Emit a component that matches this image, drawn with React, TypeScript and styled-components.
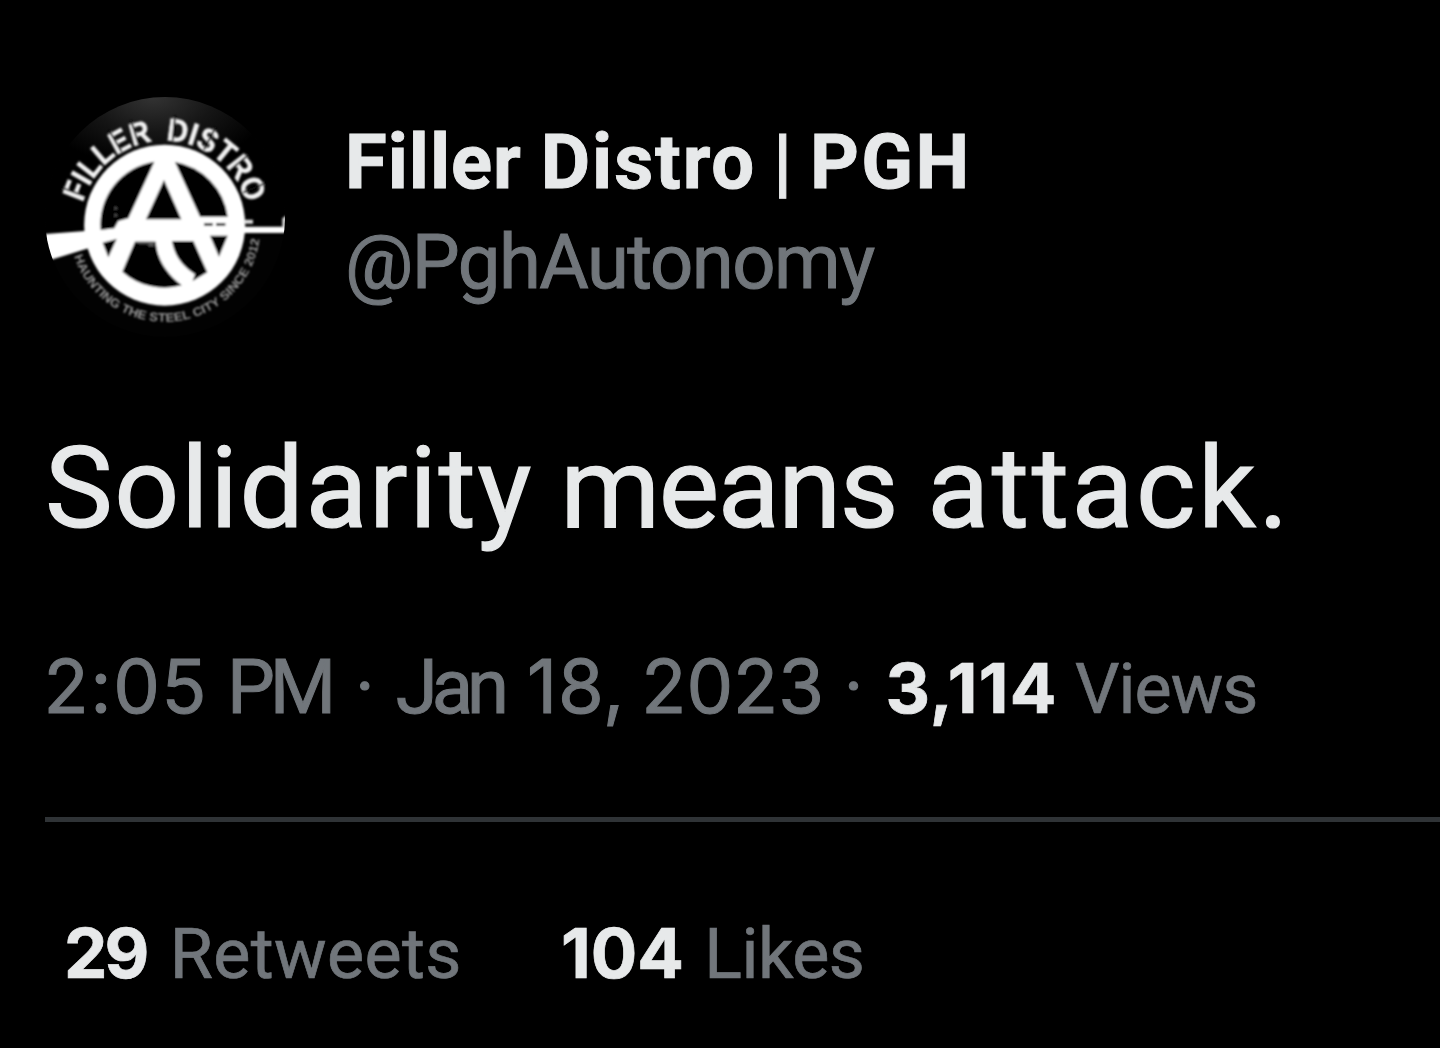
import styled, { createGlobalStyle } from "styled-components";

const GlobalStyle = createGlobalStyle`
  body {
    margin: 0;
    background: #000;
    overflow: hidden;
  }
`;

const Page = styled.main`
  box-sizing: border-box;
  height: 1048px;
  padding: 97px 0 0 45px;
  background: #000;
  color: #e7e9ea;
  font-family: Roboto, "Liberation Sans", sans-serif;
  white-space: nowrap;
`;

const Header = styled.header`
  display: flex;
  gap: 60px;
`;

const AvatarImage = styled.svg`
  width: 240px;
  height: 240px;
  border-radius: 50%;
`;

const Names = styled.div`
  padding-top: 16px;
`;

const Name = styled.div`
  font-size: 76px;
  line-height: 98px;
  font-weight: 700;
  -webkit-text-stroke: 0.9px;
`;

const Handle = styled.div`
  font-size: 76px;
  line-height: 102px;
  letter-spacing: -1.5px;
  color: #71767b;
  -webkit-text-stroke: 1px;
`;

const Body = styled.p`
  margin: 76px 0 0;
  font-size: 114px;
  line-height: 150px;
  -webkit-text-stroke: 1.2px;
`;

const Meta = styled.div`
  margin-top: 74px;
  font-size: 76px;
  line-height: 100px;
  color: #71767b;
  -webkit-text-stroke: 1px;
`;

const Stats = styled.div`
  display: flex;
  gap: 99px;
  margin-top: 80px;
  padding: 86px 0 0 20px;
  border-top: 5px solid #2f3336;
`;

const Stat = styled.span`
  font-size: 70px;
  line-height: 92px;
  color: #71767b;
  -webkit-text-stroke: 0.7px;
`;

const Word = styled.span<{ $tracking?: number; $shift?: number }>`
  letter-spacing: ${({ $tracking = 0 }) => $tracking}px;
  margin-left: ${({ $shift = 0 }) => $shift}px;
`;

const Digits = styled(Word)`
  font-family: Inter, sans-serif;
  font-size: 74px;
  line-height: 1;
`;

const Count = styled(Digits)`
  font-size: 69px;
  font-weight: 700;
  color: #e7e9ea;
`;

// angles, in degrees, where the stencil lettering is cut
const stencilCuts = [160, 120.4, 107.8, 84.5, 62.5, 40, 22.6];

function Avatar() {
  return (
    <AvatarImage viewBox="30 36 720 720">
      <defs>
        <radialGradient id="haze" cx="0.45" cy="0" r="0.5">
          <stop offset="0" stopColor="#333" />
          <stop offset="0.5" stopColor="#161616" />
          <stop offset="1" stopColor="#000" />
        </radialGradient>
        <filter id="soft">
          <feGaussianBlur stdDeviation="2.4" />
        </filter>
        <path id="topArc" d="M144 353A254 254 0 0 1 634 355" />
        <path id="bottomArc" d="M117 514A287 287 0 0 0 675 451" />
      </defs>
      <rect x="30" y="36" width="720" height="720" fill="#020202" />
      <rect x="30" y="36" width="720" height="420" fill="url(#haze)" />
      <g filter="url(#soft)" fill="#fff">
        <g
          fontFamily="Liberation Sans, sans-serif"
          fontWeight="700"
          fontSize="95"
          fill="#f2f2f2"
          stroke="#f2f2f2"
          strokeWidth="2"
        >
          <text textLength="293" lengthAdjust="spacingAndGlyphs">
            <textPath href="#topArc">FILLER</textPath>
          </text>
          <text textLength="328" lengthAdjust="spacingAndGlyphs">
            <textPath href="#topArc" startOffset="334">
              DISTRO
            </textPath>
          </text>
        </g>
        {stencilCuts.map((angle) => (
          <path
            key={angle}
            d="M644 420.5h76"
            stroke="#0c0c0c"
            strokeWidth="6"
            transform={`rotate(${-angle} 389 420.5)`}
          />
        ))}
        <text
          fontFamily="Liberation Sans, sans-serif"
          fontWeight="700"
          fontSize="37"
          fill="#999"
          textLength="770"
          lengthAdjust="spacingAndGlyphs"
        >
          <textPath href="#bottomArc">HAUNTING THE STEEL CITY SINCE 2012</textPath>
        </text>

        <circle cx="389" cy="420.5" r="241.5" />
        <g fill="#000">
          <path d="M358 230L280 400L250 408L238 430L197 435A191 191 0 0 1 358 230Z" />
          <path d="M420 231A191 191 0 0 1 578 395L495 395Z" />
          <path d="M387 285L333 403H439Z" />
          <path d="M203 473L245 462L220 517Z" />
          <path d="M525 452H578L552 515Z" />
          <path d="M300 470H362C366 520 392 565 440 601A191 191 0 0 1 262 560Z" />
          <path d="M411 468H475L517 562L473 588L480 568C440 542 418 510 411 468Z" />
          <path d="M507 414h26v8h-26zM543 414h28v8h-28z" />
        </g>
        <path d="M300 470h58v14h-18v-8h-28z" fill="#555" />
        <path d="M20 448L160 437L170 487L20 533Z" />
        <path d="M600 425H760V444H600Z" />
        <path d="M628 404h26v12h-26zM742 400l14-10v40h-14z" fill="#ddd" />
        <circle cx="242" cy="370" r="4" fill="#555" />
        <circle cx="242" cy="391" r="4" fill="#555" />
      </g>
    </AvatarImage>
  );
}

export default function App() {
  return (
    <Page>
      <GlobalStyle />
      <Header>
        <Avatar />
        <Names>
          <Name>
            <Word $tracking={1}>Filler</Word>{" "}
            <Word $tracking={1.9}>Distro</Word>{" "}
            <Word $shift={-2}>|</Word>{" "}
            <Word $tracking={2.3} $shift={-1}>PGH</Word>
          </Name>
          <Handle>@PghAutonomy</Handle>
        </Names>
      </Header>
      <Body>
        <Word $tracking={1.6}>Solidarity</Word>{" "}
        <Word $tracking={-1.5} $shift={-1}>means</Word>{" "}
        <Word $tracking={2.5} $shift={2}>attack.</Word>
      </Body>
      <Meta>
        <Digits $tracking={1.6} $shift={-1.5}>2:05</Digits>{" "}
        <Word $tracking={-5}>PM</Word>{" "}
        <Word $shift={5}>·</Word>{" "}
        <Word $tracking={-6} $shift={2}>Jan</Word>{" "}
        <Digits $tracking={1} $shift={5}>18,</Digits>{" "}
        <Digits $shift={-3}>2023</Digits>{" "}
        <Word $shift={1}>·</Word>{" "}
        <Stat>
          <Count $tracking={1.2} $shift={3}>3,114</Count>{" "}
          <Word $tracking={-1}>Views</Word>
        </Stat>
      </Meta>
      <Stats>
        <Stat>
          <Count $tracking={-3} $shift={-1}>29</Count>{" "}
          <Word $tracking={0.4} $shift={6}>Retweets</Word>
        </Stat>
        <Stat>
          <Count>104</Count>{" "}
          <Word $tracking={-0.5} $shift={3}>Likes</Word>
        </Stat>
      </Stats>
    </Page>
  );
}
